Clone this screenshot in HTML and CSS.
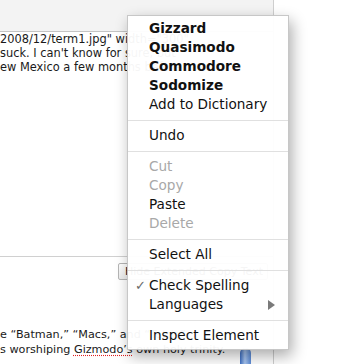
FILE: index.html
```html
<!DOCTYPE html>
<html>
<head>
<meta charset="utf-8">
<link rel="stylesheet" href="styles.css">
</head>
<body>
<div class="page">
  <div class="toolbar"></div>
  <div class="editor">
    <div class="line">2008/12/term1.jpg" width="300"</div>
    <div class="line">suck. I can't know for sure, but</div>
    <div class="line">ew Mexico a few months before</div>
  </div>
  <div class="controls">
    <div class="btn">Hide Extended Copy Text</div>
  </div>
  <div class="bottom">
    <div class="text">
      <div class="line">e “Batman,” “Macs,” and “Tetris”</div>
      <div class="line">s worshiping <span class="spell">Gizmodo’s</span> own holy trinity.</div>
    </div>
    <div class="scroll"><div class="thumb"></div></div>
  </div>
</div>

<div class="menu">
  <div class="item bold"><span class="mark"></span><span class="label">Gizzard</span></div>
  <div class="item bold"><span class="mark"></span><span class="label">Quasimodo</span></div>
  <div class="item bold"><span class="mark"></span><span class="label">Commodore</span></div>
  <div class="item bold"><span class="mark"></span><span class="label">Sodomize</span></div>
  <div class="item"><span class="mark"></span><span class="label">Add to Dictionary</span></div>
  <div class="sep"></div>
  <div class="item"><span class="mark"></span><span class="label">Undo</span></div>
  <div class="sep"></div>
  <div class="item disabled"><span class="mark"></span><span class="label">Cut</span></div>
  <div class="item disabled"><span class="mark"></span><span class="label">Copy</span></div>
  <div class="item"><span class="mark"></span><span class="label">Paste</span></div>
  <div class="item disabled"><span class="mark"></span><span class="label">Delete</span></div>
  <div class="sep"></div>
  <div class="item"><span class="mark"></span><span class="label">Select All</span></div>
  <div class="sep"></div>
  <div class="item"><span class="mark">✓</span><span class="label">Check Spelling</span></div>
  <div class="item"><span class="mark"></span><span class="label">Languages</span><span class="arrow"></span></div>
  <div class="sep"></div>
  <div class="item"><span class="mark"></span><span class="label">Inspect Element</span></div>
</div>
</body>
</html>
```

FILE: styles.css
```css
html, body {
  margin: 0;
  padding: 0;
  background: #ffffff;
}

body {
  width: 355px;
  height: 364px;
  overflow: hidden;
  position: relative;
  font-family: "DejaVu Sans", "Liberation Sans", sans-serif;
  color: #1a1a1a;
}

.page {
  width: 273px;
  height: 364px;
  border-right: 1px solid #cfcfcf;
  display: flex;
  flex-direction: column;
  overflow: hidden;
}

.toolbar {
  height: 31px;
  background: #f3f3f3;
  flex: none;
}

.editor {
  flex: none;
  height: 224px;
  background: #ffffff;
  border-top: 1px solid #c4c4c4;
  border-bottom: 1px solid #d0d0d0;
  font-size: 11.4px;
  line-height: 14px;
  white-space: nowrap;
  overflow: hidden;
}

.controls {
  flex: none;
  height: 63px;
  padding-top: 6px;
  box-sizing: border-box;
}

.btn {
  margin-left: 118px;
  width: 150px;
  height: 17px;
  box-sizing: border-box;
  border: 1px solid #b5b5b5;
  border-radius: 2px;
  background: linear-gradient(#ffffff, #ececec);
  font-size: 11px;
  line-height: 15px;
  padding-left: 6px;
  white-space: nowrap;
  overflow: hidden;
  color: #222;
}

.bottom {
  flex: 1;
  display: flex;
  padding-top: 7px;
}

.text {
  width: 240px;
  flex: none;
  font-size: 11.2px;
  line-height: 15px;
  white-space: nowrap;
  overflow: hidden;
}

.spell {
  text-decoration: underline dotted #e02020;
  text-underline-offset: 2px;
}

.scroll {
  width: 11px;
  flex: none;
}

.thumb {
  margin-top: 21px;
  height: 30px;
  border-radius: 5px 5px 0 0;
  background: linear-gradient(90deg, #3d6fc4, #a9c6f0 45%, #5a8ad6);
}

.menu {
  position: absolute;
  left: 127px;
  top: 15px;
  width: 162px;
  height: 335px;
  box-sizing: border-box;
  border: 1px solid rgba(0, 0, 0, 0.22);
  background: rgba(255, 255, 255, 0.955);
  box-shadow: 3px 6px 14px rgba(0, 0, 0, 0.33);
  padding: 3px 0 4px;
  font-size: 13.6px;
  color: #111;
}

.item {
  display: flex;
  align-items: center;
  height: 19px;
  line-height: 19px;
  white-space: nowrap;
}

.mark {
  width: 21px;
  flex: none;
  box-sizing: border-box;
  padding-left: 7px;
  color: #6a6a6a;
  font-size: 13px;
}

.label {
  flex: 1;
}

.bold .label {
  font-weight: bold;
}

.disabled {
  color: #a8a8a8;
}

.arrow {
  width: 0;
  height: 0;
  border-left: 7px solid #7a7a7a;
  border-top: 5px solid transparent;
  border-bottom: 5px solid transparent;
  margin-right: 13px;
}

.sep {
  height: 1px;
  background: #e0e0e0;
  margin: 6px 0 5px;
}
```
